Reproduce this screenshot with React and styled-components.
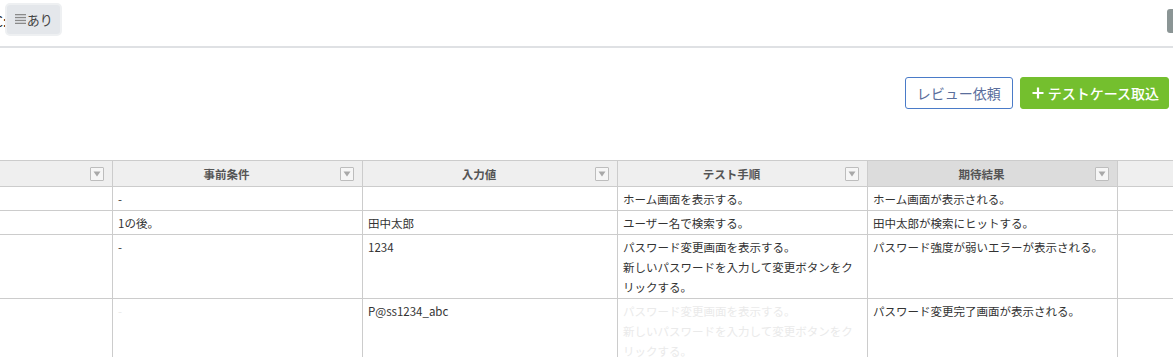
import React from "react";
import styled, { createGlobalStyle } from "styled-components";

const Global = createGlobalStyle`
  html, body {
    margin: 0;
    padding: 0;
    background: #fff;
    overflow: hidden;
  }
  body {
    width: 1173px;
    height: 357px;
    font-family: "Noto Sans CJK JP", "Noto Sans", sans-serif;
    color: #333;
  }
`;

const Page = styled.div`
  position: relative;
  width: 1173px;
  height: 357px;
  overflow: hidden;
`;

const TopBar = styled.div`
  display: flex;
  align-items: center;
  height: 46px;
  border-bottom: 2px solid #dfe1e4;
`;

const Label = styled.span`
  margin-left: -6px;
  font-size: 14px;
  color: #222;
  margin-top: -4px;
`;

const Chip = styled.div`
  display: flex;
  align-items: center;
  gap: 1px;
  height: 29px;
  margin-left: -2px;
  margin-top: -8px;
  padding: 0 7px 0 8px;
  background: #e4e7eb;
  border: 2px solid #eef0f2;
  border-radius: 5px;
  font-size: 13px;
  color: #444;
`;

const Scroll = styled.div`
  position: absolute;
  right: 0;
  top: 9px;
  width: 6px;
  height: 24px;
  background: #8b9595;
  border-radius: 3px 0 0 3px;
`;

const Actions = styled.div`
  display: flex;
  justify-content: flex-end;
  gap: 7px;
  padding: 29px 4px 0 0;
`;

const Button = styled.button`
  display: flex;
  align-items: center;
  gap: 4px;
  height: 32px;
  padding: ${(p) => (p.$primary ? "0 9px 0 11px" : "0 11px")};
  border-radius: 3px;
  font-family: "Noto Sans CJK JP", sans-serif;
  font-size: 14px;
  cursor: pointer;
  border: 1px solid ${(p) => (p.$primary ? "#74bf2e" : "#4a7bc8")};
  background: ${(p) => (p.$primary ? "#74bf2e" : "#fff")};
  color: ${(p) => (p.$primary ? "#fff" : "#5a6e9c")};
  ${(p) => p.$primary && "font-weight: 500;"}
`;

const TableWrap = styled.div`
  margin-top: 51px;
  margin-left: -88px;
`;

const Table = styled.table`
  border-collapse: collapse;
  table-layout: fixed;
  width: 1361px;
`;

const Th = styled.th`
  height: 25px;
  padding: 0;
  background: ${(p) => (p.$active ? "#dcdcdc" : "#efefef")};
  border: 1px solid #cccccc;
  font-size: 11.5px;
  font-weight: 700;
  color: #555;
`;

const HeadInner = styled.div`
  display: flex;
  align-items: center;
  padding: 0 8px 0 0;
`;

const HeadText = styled.span`
  flex: 1;
  text-align: center;
`;

const FilterBtn = styled.span`
  display: flex;
  align-items: center;
  justify-content: center;
  width: 12px;
  height: 12px;
  border: 1px solid #bdbdbd;
  background: #f6f6f6;
  border-radius: 1px;
`;

const Td = styled.td`
  padding: 2px 5px 1px;
  vertical-align: top;
  border: 1px solid #cccccc;
  font-size: 11.5px;
  line-height: 20px;
  color: ${(p) => (p.$faded ? "#eaeaea" : "#333")};
  word-break: break-all;
`;

const Lines = () => (
  <svg width="11" height="10" viewBox="0 0 11 10">
    <g fill="#8a8a8a">
      <rect x="0" y="0" width="11" height="1.3" />
      <rect x="0" y="2.9" width="11" height="1.3" />
      <rect x="0" y="5.8" width="11" height="1.3" />
      <rect x="0" y="8.7" width="11" height="1.3" />
    </g>
  </svg>
);

const Plus = () => (
  <svg width="12" height="12" viewBox="0 0 12 12">
    <path d="M6 0.5v11M0.5 6h11" stroke="#fff" strokeWidth="2.2" />
  </svg>
);

const Tri = () => (
  <svg width="8" height="6" viewBox="0 0 8 6">
    <path d="M0.5 0.5h7L4 5.5z" fill="#a9a9a9" />
  </svg>
);

const columns = [
  { w: 200, label: "" },
  { w: 250, label: "事前条件" },
  { w: 255, label: "入力値" },
  { w: 250, label: "テスト手順" },
  { w: 250, label: "期待結果", active: true },
  { w: 156, label: null },
];

const steps = (
  <>
    パスワード変更画面を表示する。
    <br />
    新しいパスワードを入力して変更ボタンをクリックする。
  </>
);

const rows = [
  ["", "-", "", "ホーム画面を表示する。", "ホーム画面が表示される。", ""],
  ["", "1の後。", "田中太郎", "ユーザー名で検索する。", "田中太郎が検索にヒットする。", ""],
  ["", "-", "1234", steps, "パスワード強度が弱いエラーが表示される。", ""],
  ["", "-", "P@ss1234_abc", steps, "パスワード変更完了画面が表示される。", ""],
];

export default function App() {
  return (
    <Page>
      <Global />
      <TopBar>
        <Label>C:</Label>
        <Chip>
          <Lines />
          あり
        </Chip>
      </TopBar>
      <Scroll />
      <Actions>
        <Button>レビュー依頼</Button>
        <Button $primary>
          <Plus />
          テストケース取込
        </Button>
      </Actions>
      <TableWrap>
        <Table>
          <colgroup>
            {columns.map((c, i) => (
              <col key={i} style={{ width: c.w }} />
            ))}
          </colgroup>
          <thead>
            <tr>
              {columns.map((c, i) => (
                <Th key={i} $active={c.active}>
                  {c.label !== null && (
                    <HeadInner>
                      <HeadText>{c.label}</HeadText>
                      <FilterBtn>
                        <Tri />
                      </FilterBtn>
                    </HeadInner>
                  )}
                </Th>
              ))}
            </tr>
          </thead>
          <tbody>
            {rows.map((r, ri) => (
              <tr key={ri}>
                {r.map((cell, ci) => (
                  <Td key={ci} $faded={ri === 3 && (ci === 1 || ci === 3)}>
                    {cell}
                  </Td>
                ))}
              </tr>
            ))}
          </tbody>
        </Table>
      </TableWrap>
    </Page>
  );
}
